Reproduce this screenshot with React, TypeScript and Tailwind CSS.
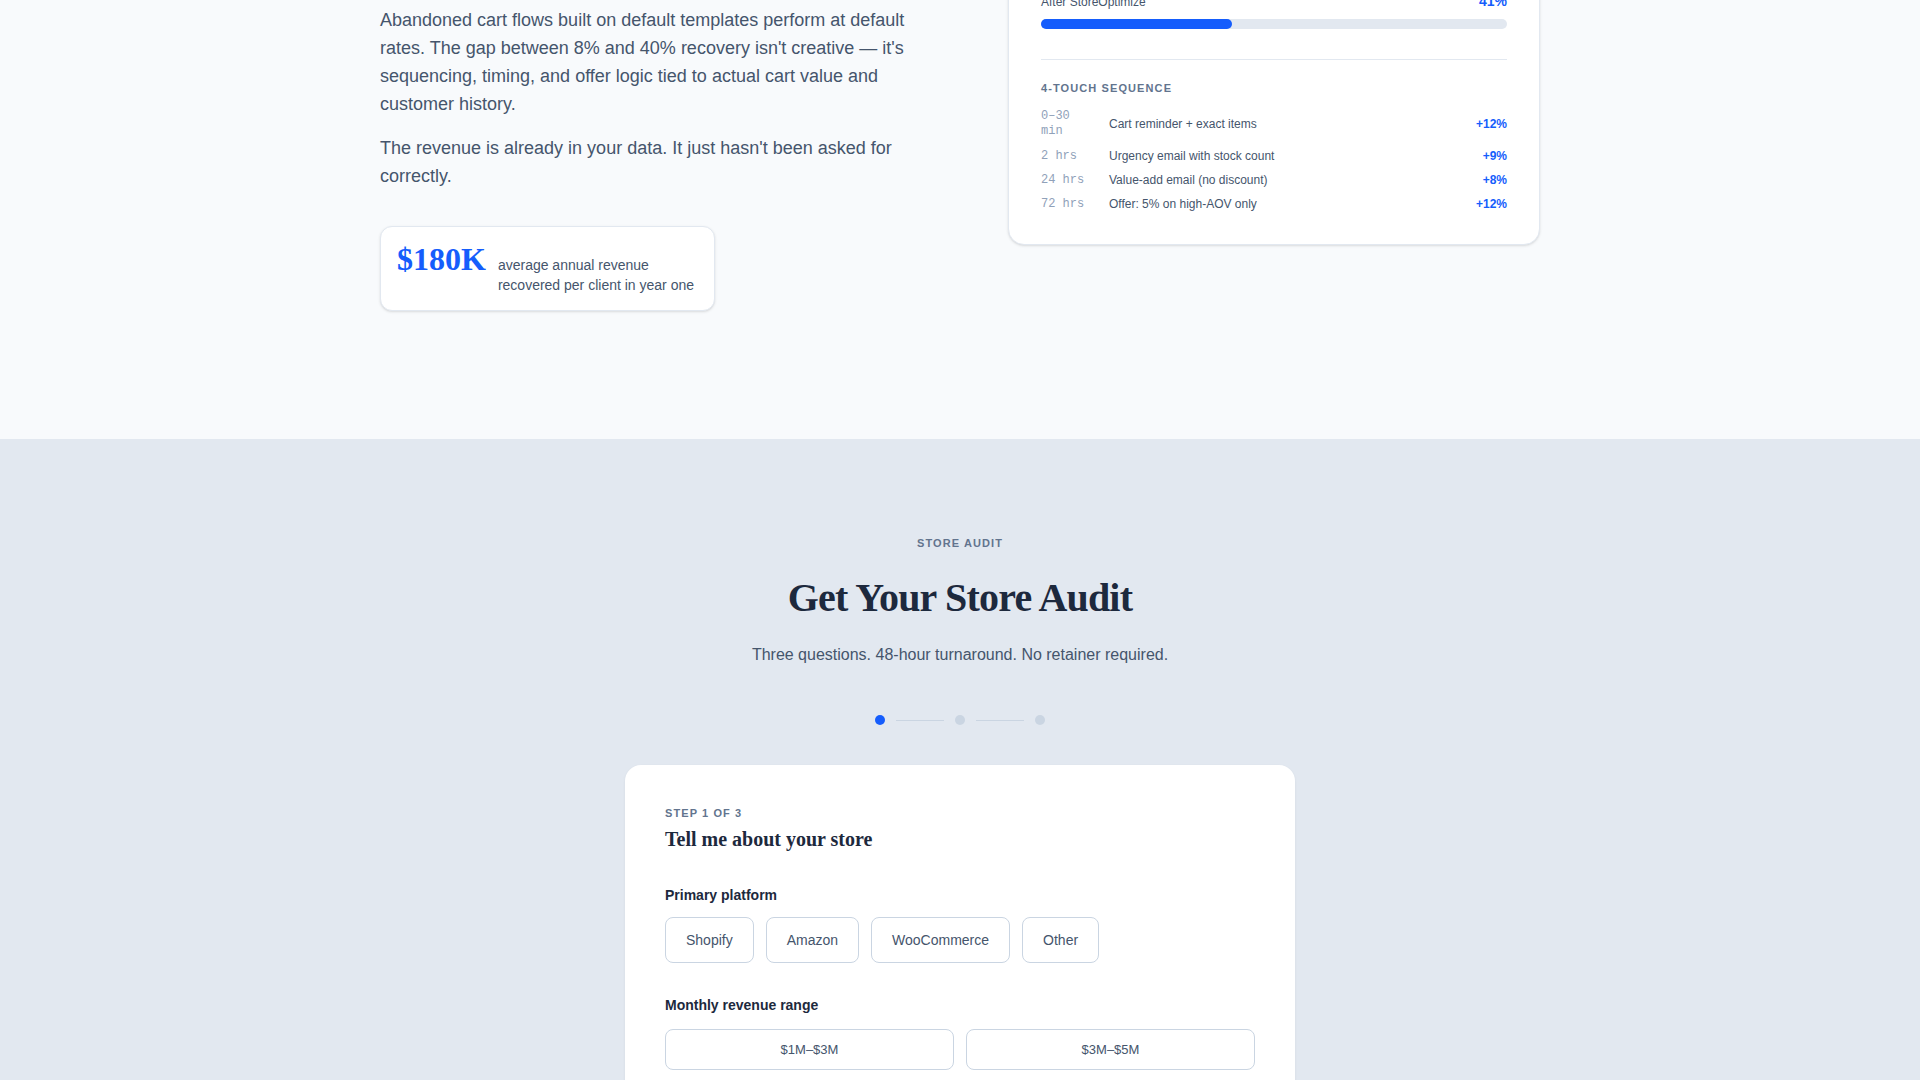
const sequence = [
  { time: "0–30 min", label: "Cart reminder + exact items", lift: "+12%" },
  { time: "2 hrs", label: "Urgency email with stock count", lift: "+9%" },
  { time: "24 hrs", label: "Value-add email (no discount)", lift: "+8%" },
  { time: "72 hrs", label: "Offer: 5% on high-AOV only", lift: "+12%" },
];

const platforms = ["Shopify", "Amazon", "WooCommerce", "Other"];
const revenueRanges = ["$1M–$3M", "$3M–$5M", "$5M–$10M", "$10M+"];

function RecoveryCard() {
  return (
    <div className="-mt-[150px] rounded-2xl border border-slate-200 bg-white p-8 shadow-sm">
      <p className="mb-6 text-sm font-semibold leading-5 text-slate-800">Cart recovery rate</p>
      <div className="flex items-baseline justify-between">
        <span className="text-xs leading-4 text-slate-600">Default flow</span>
        <span className="text-sm font-bold leading-5 text-slate-500">8%</span>
      </div>
      <div className="mt-2 h-2.5 rounded-full bg-slate-200">
        <div className="h-full w-[8%] rounded-full bg-slate-400" />
      </div>
      <div className="mt-5 flex items-baseline justify-between">
        <span className="text-xs leading-4 text-slate-600">After StoreOptimize</span>
        <span className="text-sm font-bold leading-5 text-blue-600">41%</span>
      </div>
      <div className="mt-2 h-2.5 rounded-full bg-slate-200">
        <div className="h-full w-[41%] rounded-full bg-blue-600" />
      </div>

      <div className="mt-[30px] border-t border-slate-200 pt-5">
        <p className="mb-[13px] text-[11px] font-bold uppercase leading-4 tracking-[0.1em] text-slate-500">
          4-Touch Sequence
        </p>
        <div className="flex flex-col gap-2">
          {sequence.map((s, i) => (
            <div key={s.time} className={`flex items-center gap-3 ${i === 0 ? "pb-px" : ""}`}>
              <span className="w-14 shrink-0 font-['Liberation_Mono',monospace] text-xs leading-[15px] text-slate-400">
                {s.time}
              </span>
              <span className="flex-1 text-xs leading-4 text-slate-600">{s.label}</span>
              <span className="text-xs font-bold leading-4 text-blue-600">{s.lift}</span>
            </div>
          ))}
        </div>
      </div>
    </div>
  );
}

function AuditForm() {
  return (
    <div className="mx-auto mt-10 max-w-[670px] rounded-2xl bg-white p-10 shadow-[0_1px_3px_rgba(15,23,42,0.06)]">
      <p className="text-[11px] font-bold uppercase leading-4 tracking-[0.1em] text-slate-500">Step 1 of 3</p>
      <h3 className="mt-1 font-['Liberation_Serif',serif] text-xl font-bold leading-7 text-slate-800">
        Tell me about your store
      </h3>

      <p className="mt-8 text-sm font-bold leading-5 text-slate-800">Primary platform</p>
      <div className="mt-3 flex flex-wrap gap-3">
        {platforms.map((p) => (
          <button
            key={p}
            className="rounded-lg border border-slate-300 bg-white px-5 py-3 text-sm leading-5 text-slate-600"
          >
            {p}
          </button>
        ))}
      </div>

      <p className="mt-8 text-sm font-bold leading-5 text-slate-800">Monthly revenue range</p>
      <div className="mt-3.5 grid grid-cols-2 gap-3">
        {revenueRanges.map((r) => (
          <button
            key={r}
            className="rounded-lg border border-slate-300 bg-white py-2.5 text-[13px] leading-[19px] text-slate-600"
          >
            {r}
          </button>
        ))}
      </div>

      {/* step 2 + 3 come after this */}
      <div className="mt-8 flex justify-end">
        <button className="rounded-lg bg-blue-600 px-6 py-3 text-sm font-bold text-white">Next</button>
      </div>
    </div>
  );
}

export default function App() {
  return (
    <div className="h-screen overflow-hidden bg-slate-50 font-['Liberation_Sans',Arial,sans-serif]">
      <section className="bg-slate-50 pt-[6px] pb-32">
        <div className="mx-auto grid max-w-[1200px] grid-cols-2 items-start gap-24 px-5">
          <div>
            <p className="text-lg leading-[28px] text-slate-600">
              Abandoned cart flows built on default templates perform at default rates. The gap between 8% and
              40% recovery isn't creative — it's sequencing, timing, and offer logic tied to actual cart value and
              customer history.
            </p>
            <p className="mt-4 text-lg leading-[28px] text-slate-600">
              The revenue is already in your data. It just hasn't been asked for correctly.
            </p>

            <div className="mt-9 flex w-fit items-baseline gap-3 rounded-xl border border-slate-200 bg-white px-4 pt-4 pb-[15px] shadow-sm">
              <span className="font-['Liberation_Serif',serif] text-[32px] font-bold leading-none text-blue-600">
                $180K
              </span>
              <span className="max-w-[200px] text-sm leading-[1.4] text-slate-600">
                average annual revenue recovered per client in year one
              </span>
            </div>
          </div>

          <RecoveryCard />
        </div>
      </section>

      <section className="bg-[#e2e8f0] px-5 pt-[95px] pb-24">
        <p className="text-center text-[11px] font-bold uppercase leading-[18px] tracking-[0.1em] text-slate-500">
          Store Audit
        </p>
        <h2 className="mt-[22px] text-center font-['Liberation_Serif',serif] text-[40px] font-bold leading-[48px] tracking-[-0.02em] text-slate-800">
          Get Your Store Audit
        </h2>
        <p className="mt-[21px] text-center text-base leading-6 text-slate-600">
          Three questions. 48-hour turnaround. No retainer required.
        </p>

        <div className="mt-12 flex items-center justify-center gap-[11px]">
          <span className="h-2.5 w-2.5 rounded-full bg-blue-600" />
          <span className="h-px w-12 bg-slate-300" />
          <span className="h-2.5 w-2.5 rounded-full bg-slate-300" />
          <span className="h-px w-12 bg-slate-300" />
          <span className="h-2.5 w-2.5 rounded-full bg-slate-300" />
        </div>

        <AuditForm />
      </section>
    </div>
  );
}
